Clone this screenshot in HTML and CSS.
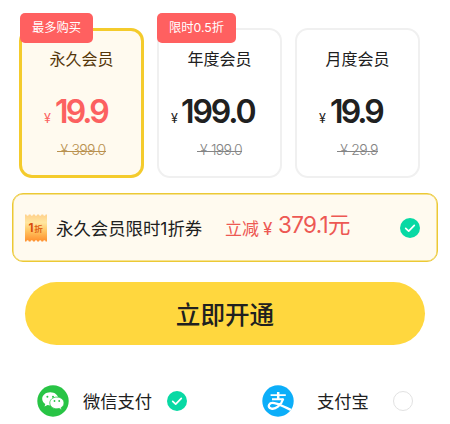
FILE: index.html
```html
<!DOCTYPE html>
<html lang="zh-CN">
<head>
<meta charset="utf-8">
<title>会员开通</title>
<link rel="stylesheet" href="styles.css">
</head>
<body>
<main class="page">
  <section class="plans">
    <article class="plan plan--active">
      <span class="badge">最多购买</span>
      <h2 class="plan-name">永久会员</h2>
      <p class="price"><span class="yen">¥</span><span class="amount">19.9</span></p>
      <p class="old"><span class="old-yen">¥</span>399.0</p>
    </article>
    <article class="plan plan--year">
      <span class="badge badge--wide">限时0.5折</span>
      <h2 class="plan-name">年度会员</h2>
      <p class="price"><span class="yen">¥</span><span class="amount">199.0</span></p>
      <p class="old"><span class="old-yen">¥</span>199.0</p>
    </article>
    <article class="plan plan--month">
      <h2 class="plan-name">月度会员</h2>
      <p class="price"><span class="yen">¥</span><span class="amount">19.9</span></p>
      <p class="old"><span class="old-yen">¥</span>29.9</p>
    </article>
  </section>

  <section class="coupon">
    <svg class="ticket" viewBox="0 0 22 28">
      <defs>
        <linearGradient id="gold" x1="0" y1="0" x2="0" y2="1">
          <stop offset="0" stop-color="#ffd08a"/>
          <stop offset=".3" stop-color="#ffe6a0"/>
          <stop offset=".6" stop-color="#ffc663"/>
          <stop offset="1" stop-color="#ff8f2c"/>
        </linearGradient>
      </defs>
      <path fill="url(#gold)" d="M0 .5h1.400a1.200 1.200 0 0 0 2.400 0h1.800a1.200 1.200 0 0 0 2.400 0h1.800a1.200 1.200 0 0 0 2.400 0h1.800a1.200 1.200 0 0 0 2.400 0h1.800a1.200 1.200 0 0 0 2.400 0H22v27h-1.400a1.200 1.200 0 0 0-2.400 0h-1.800a1.200 1.200 0 0 0-2.400 0h-1.800a1.200 1.200 0 0 0-2.400 0H8a1.200 1.200 0 0 0-2.400 0H3.800a1.200 1.200 0 0 0-2.400 0H0z"/>
      <text class="ticket-num" x="3.600" y="17.500">1</text>
      <text class="ticket-unit" x="9.300" y="17.900">折</text>
    </svg>
    <span class="coupon-name">永久会员限时1折券</span>
    <span class="saving">立减<span class="saving-yen">¥</span><span class="saving-sum">379.1元</span></span>
    <svg class="check" viewBox="0 0 20 20"><circle cx="10" cy="10" r="10"/><path d="M5.700 10.300l3 2.900 5.600-5.800"/></svg>
  </section>

  <button class="submit" type="button">立即开通</button>

  <section class="payments">
    <div class="pay pay--wechat">
      <svg class="logo" viewBox="0 0 32 32">
        <circle cx="16" cy="16" r="15.700" fill="#28c445"/>
        <path fill="#fff" d="M13.300 7.200c-4.600 0-8.100 2.900-8.100 6.600 0 2.200 1.200 4 3.100 5.200l-.8 2.500 3-1.500c1 .3 1.900.4 2.900.4 4.400 0 8-2.900 8-6.600s-3.600-6.600-8.100-6.600z"/>
        <path fill="#fff" stroke="#28c445" stroke-width=".8" d="M19.800 12.100c-4 0-7 2.600-7 5.800 0 3.300 3 5.900 7 5.900.8 0 1.600-.1 2.400-.4l2.700 1.500-.7-2.300c1.800-1.100 2.800-2.800 2.800-4.700 0-3.200-3.200-5.800-7.200-5.800z"/>
        <g fill="#28c445"><circle cx="10.400" cy="11.700" r="1"/><circle cx="16" cy="11.700" r="1"/><circle cx="17.500" cy="16" r=".9"/><circle cx="22.200" cy="16" r=".9"/></g>
      </svg>
      <span class="pay-name">微信支付</span>
      <svg class="check" viewBox="0 0 20 20"><circle cx="10" cy="10" r="10"/><path d="M5.700 10.300l3 2.900 5.600-5.800"/></svg>
    </div>
    <div class="pay pay--alipay">
      <svg class="logo" viewBox="0 0 32 32">
        <defs><clipPath id="disc"><circle cx="16" cy="16" r="15.700"/></clipPath></defs>
        <circle cx="16" cy="16" r="15.700" fill="#0caef9"/>
        <g clip-path="url(#disc)" fill="none" stroke="#fff">
          <path stroke-width="2.500" d="M16.200 7v7.200"/>
          <path stroke-width="1.900" d="M8.600 10.100h15.200M10 14.200h11.600"/>
          <path stroke-width="2.300" d="M21.200 13.700c-1 3.400-2.900 6.200-5.300 8-2.300 1.800-4.700 2.300-6.500 1.900-2.300-.5-3.200-2.300-2.300-3.900 1-1.800 4.100-2.100 7.300-1.100 4.100 1.200 9.100 3.800 16.200 7"/>
        </g>
      </svg>
      <span class="pay-name">支付宝</span>
      <span class="radio"></span>
    </div>
  </section>
</main>
</body>
</html>
```
FILE: styles.css
```css
* { box-sizing: border-box; }
body {
  margin: 0;
  background: #fff;
  color: #202020;
  font-family: Inter, "Noto Sans CJK SC", sans-serif;
}
h2, p { margin: 0; font-weight: 400; }
.page { width: 450px; height: 424px; padding-top: 28px; overflow: hidden; }

.plans { display: flex; gap: 13px; padding-left: 19px; }
.plan {
  position: relative;
  width: 125px;
  height: 150px;
  padding-top: 17px;
  border: 2px solid #f0f0f0;
  border-radius: 13px;
}
.plan--active { padding-top: 16px; background: #fffaef; border: 3px solid #f4cb2c; }
.badge {
  position: absolute;
  top: -17px;
  left: -2px;
  width: 79px;
  height: 30px;
  border-radius: 5px;
  background: #ff6060;
  color: #fff;
  font-size: 12.300px;
  line-height: 30px;
  text-align: center;
  white-space: nowrap;
}
.plan--active .badge { top: -18px; width: 73px; }
.plan-name { font-size: 16px; line-height: 24px; text-align: center; }
.plan--active .plan-name { color: #553609; }
.price { display: flex; align-items: baseline; height: 40px; margin-top: 21px; line-height: 40px; }
.plan--active .price { padding-left: 22px; color: #fc6060; }
.plan--year .price { padding-left: 12px; }
.plan--month .price { padding-left: 22px; }
.yen { width: 11px; font-size: 12.500px; font-weight: 400; }
.amount { font-size: 32px; font-weight: 600; letter-spacing: -2.900px; }
.plan--year .amount { margin-left: -1px; letter-spacing: -2.100px; }
.old {
  display: flex;
  justify-content: center;
  width: max-content;
  height: 20px;
  margin: 8px auto 0;
  color: #858585;
  font-size: 14px;
  font-weight: 300;
  line-height: 20px;
  letter-spacing: -.6px;
  background: linear-gradient(currentColor, currentColor) 0 11px / 100% 1px no-repeat;
}
.old-yen { width: 14px; padding-left: 3px; }
.plan--active .old { color: #b99150; }

.coupon {
  display: flex;
  align-items: center;
  width: 426px;
  height: 69px;
  margin: 15px 0 0 12px;
  padding: 0 17px 0 12px;
  border: 1px solid #ecc935;
  border-radius: 11px;
  background: #fffaef;
  box-shadow: inset 0 0 0 .5px #ecc935;
}
.ticket { width: 22px; height: 28px; flex: none; }
.ticket-num { fill: #d84c0c; font-size: 11.500px; font-weight: 700; }
.ticket-unit { fill: #df6519; font-size: 8.500px; font-weight: 700; }
.coupon-name { width: 169px; margin-left: 9px; font-size: 17.400px; white-space: nowrap; }
.saving { display: flex; align-items: baseline; margin-top: -6px; color: #ed5853; font-size: 17px; white-space: nowrap; }
.saving-yen { width: 19px; padding-left: 4px; }
.saving-sum { position: relative; top: -2px; font-size: 22.500px; letter-spacing: -.7px; }
.check { width: 20px; height: 20px; flex: none; fill: #08d9a4; }
.check path { fill: none; stroke: #fff; stroke-width: 1.700; stroke-linecap: round; stroke-linejoin: round; }
.coupon .check { margin-left: auto; }

.submit {
  display: block;
  width: 400px;
  height: 63px;
  margin: 20px 0 0 25px;
  padding: 0;
  border: 0;
  border-radius: 32px;
  background: #ffd73e;
  color: #202020;
  font: 500 24.600px/63px "Noto Sans CJK SC", sans-serif;
}
.payments { display: flex; height: 32px; margin-top: 40px; padding-left: 37px; }
.pay { display: flex; align-items: center; flex: none; width: 225px; }
.pay--alipay { width: 151px; }
.logo { width: 32px; height: 32px; flex: none; }
.pay-name { margin: -2px 0 0 14px; font-size: 17.300px; white-space: nowrap; }
.pay .check { margin-left: 15px; }
.pay--alipay .pay-name { margin-left: 23px; }
.radio { width: 20px; height: 20px; flex: none; margin-left: auto; border: 1px solid #e2e2e2; border-radius: 50%; }
```
